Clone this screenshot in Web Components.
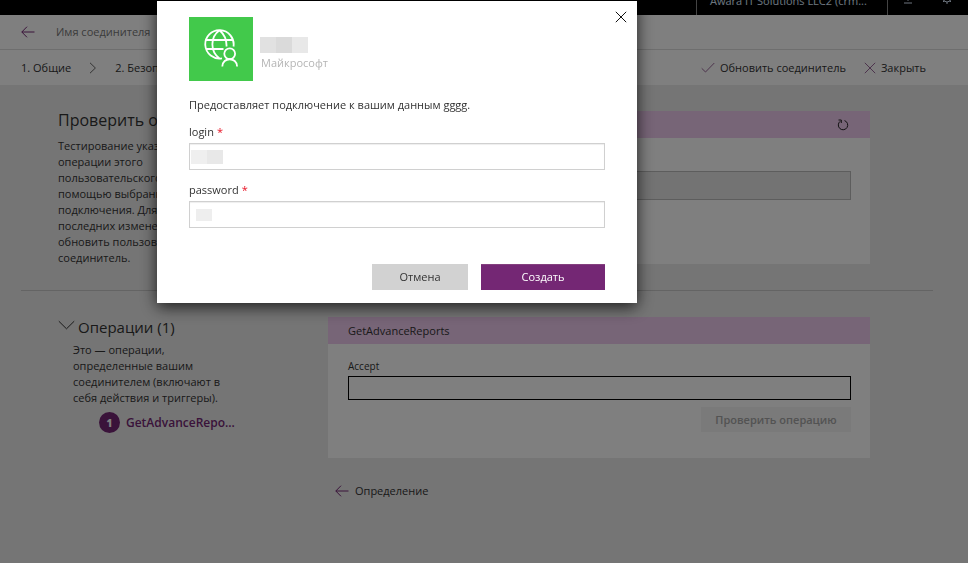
<!DOCTYPE html>
<html lang="ru">
<head>
<meta charset="utf-8">
<title>Проверка соединителя</title>
<style>
html, body { margin: 0; min-height: 100%; background: #ebebeb; }
body { font: 11px/16px "Open Sans", "Noto Sans", sans-serif; color: #333; }
</style>
</head>
<body>
<connector-page></connector-page>
<script>
const define = (name, html, setup) => customElements.define(name, class extends HTMLElement {
  connectedCallback() {
    if (this.shadowRoot) return;
    const t = document.createElement('template');
    t.innerHTML = html;
    this.attachShadow({ mode: 'open' }).append(t.content.cloneNode(true));
    if (setup) setup(this, this.shadowRoot);
  }
});

const icons = {
  back: [14, 12, '<path d="M13.5 6H.8M6 .7.8 6 6 11.3"/>'],
  next: [8, 12, '<path d="M1 .8 6.4 6 1 11.2"/>'],
  down: [17, 10, '<path d="M.8 1.2 8.5 8.8 16.200 1.2"/>'],
  check: [14, 12, '<path d="M.7 6.300 4.500 10 13.300 1"/>'],
  cross: [12, 12, '<path d="M.8.8 11.200 11.200M11.200.8.8 11.200"/>'],
  refresh: [12, 12, '<path d="M7.500 1.600A4.700 4.700 0 1 1 3.200 2.300M1.500 1H4.300V4"/>'],
  download: [10, 10, '<path d="M5 0V6M2.500 4 5 6.500 7.500 4M1 9H9"/>'],
  gear: [12, 12, '<circle cx="6" cy="6" r="4"/><circle cx="6" cy="6" r="1.500"/><path d="M6 0V2M6 10V12M0 6H2M10 6H12M2 2 3.300 3.300M8.700 8.700 10 10M10 2 8.700 3.300M3.300 8.700 2 10"/>'],
  globe: [36, 40, '<g stroke-width="1.800"><path d="M19 29.300A14.200 14.200 0 1 1 30.500 17.500M16.500 1.200C7 8 7 22.500 16.500 29.500M16.500 1.200C21.500 5.500 23.800 11 23.500 17.500M3.300 11H29.700M3.300 20H20.500"/><circle cx="26.700" cy="24.800" r="5.400"/><path d="M19.300 37.500C19.500 27.800 33.900 27.800 34.100 37.500"/></g>']
};
define('ui-icon', '<style>:host{display:inline-flex;flex:none}svg{display:block;fill:none;stroke:currentColor;stroke-width:1}</style>', (el, root) => {
  const [w, h, body] = icons[el.getAttribute('name')];
  root.innerHTML += `<svg width="${w}" height="${h}" viewBox="0 0 ${w} ${h}" aria-hidden="true">${body}</svg>`;
});

define('top-bar', `
<style>
:host{display:flex;justify-content:flex-end;align-items:flex-end;height:15px;overflow:hidden;background:#000;color:#dcebff}
.org{box-sizing:border-box;width:192px;height:32px;padding:10px 12px 0 13px;border:solid #888;border-width:0 1px;white-space:nowrap}
.tools{display:flex;align-items:flex-end;gap:28px;width:80px;height:32px;box-sizing:border-box;padding:0 0 11px 15px}
</style>
<div class="org">Awara IT Solutions LLC2 (crm...</div>
<div class="tools"><ui-icon name="download"></ui-icon><ui-icon name="gear"></ui-icon></div>`);

define('title-bar', `
<style>
:host{display:flex;align-items:center;gap:21px;height:34px;padding:0 21px;background:#fff;border-bottom:1px solid #dcdcdc;color:#777}
button{display:flex;padding:0;border:0;background:none;color:#742774}
</style>
<button aria-label="Назад"><ui-icon name="back"></ui-icon></button><slot></slot>`);

define('step-bar', `
<style>
:host{display:flex;align-items:center;height:35px;padding:0 42px 0 21px;background:#fff}
a{color:inherit;text-decoration:none;white-space:nowrap}
nav{display:flex;align-items:center;gap:18px;flex:1;color:#333}
nav ui-icon{color:#666}
.actions{display:flex;gap:18px}
button{display:flex;align-items:center;gap:5px;padding:0;border:0;background:none;font:inherit;color:#333}
button ui-icon{color:#996699}
</style>
<nav><a href="#general">1. Общие</a><ui-icon name="next"></ui-icon><a href="#security">2. Безопасность</a></nav>
<div class="actions"><button><ui-icon name="check"></ui-icon>Обновить соединитель</button><button><ui-icon name="cross"></ui-icon>Закрыть</button></div>`);

define('page-section', `
<style>
:host{display:flex;align-items:flex-start}
.info{width:307px;flex:none;box-sizing:border-box}
.card{flex:1;min-width:0;margin-right:63px}
</style>
<div class="info"><slot name="info"></slot></div><div class="card"><slot></slot></div>`);

define('test-card', `
<style>
:host{display:block;background:#fff}
header{display:flex;align-items:center;justify-content:space-between;height:27px;padding:0 21px 0 20px;background:#efcaef;font-weight:500}
.body{padding:16px 19px 26px 20px}
</style>
<header><slot name="title"></slot><slot name="tool"></slot></header>
<div class="body"><slot></slot></div>`);

define('test-intro', `
<style>
:host{display:block;padding-left:37px}
h2{margin:0 0 9px;font-size:16px;line-height:18px;font-weight:400}
p{margin:0;white-space:nowrap}
</style>
<h2>Проверить операцию</h2>
<p>Тестирование указанной<br>операции этого<br>пользовательского<br>помощью выбранного<br>подключения. Для<br>последних изменений<br>обновить пользовательский<br>соединитель.</p>`);

define('operations-intro', `
<style>
:host{display:block;padding-left:37px}
h2{display:flex;align-items:flex-start;gap:3px;margin:0 0 5px;font-size:15px;line-height:20px;font-weight:400}
h2 ui-icon{padding-top:3px}
p{margin:0 0 6px 15px;white-space:nowrap}
a{display:flex;align-items:center;gap:6px;margin-left:41px;color:#742774;font-size:12px;font-weight:600;text-decoration:none}
b{display:grid;place-items:center;width:21px;height:21px;border-radius:50%;background:#742774;color:#fff;font-size:10px}
</style>
<h2><ui-icon name="down"></ui-icon>Операции (1)</h2>
<p>Это — операции,<br>определенные вашим<br>соединителем (включают в<br>себя действия и триггеры).</p>
<a href="#operation"><b>1</b>GetAdvanceRepo...</a>`);

define('connection-form', `
<style>
:host{display:block}
label{display:block;margin-bottom:5px;font-size:10px;line-height:12px}
select{display:block;appearance:none;width:100%;height:29px;box-sizing:border-box;border:1px solid #bbb;border-radius:0;background:#e6e6e6;opacity:1}
div{height:38px}
</style>
<label for="c">Подключения</label><select id="c" disabled><option></option></select><div></div>`);

define('operation-form', `
<style>
:host{display:block}
label{display:block;margin-bottom:4px;font-size:10px;line-height:12px}
input{display:block;width:100%;height:24px;box-sizing:border-box;border:1px solid #000;border-radius:0;background:#fff}
button{display:block;margin:7px 0 0 auto;width:150px;height:25px;padding:0;border:0;background:#f4f4f4;color:#a6a6a6;font:inherit;font-weight:600}
</style>
<label for="a">Accept</label><input id="a"><button disabled>Проверить операцию</button>`);

define('form-field', `
<style>
:host{display:block}
label{display:flex;gap:3px;line-height:16px;margin-bottom:3px}
.star{color:#e81123}
input{display:block;width:100%;height:27px;box-sizing:border-box;padding:0 6px;border:1px solid #d0d0d0;border-radius:0;box-shadow:inset 0 1px 1px #eee;font:inherit;background:var(--mask,#fff)}
</style>
<label for="f"><span class="text"></span><span class="star">*</span></label><input id="f">`, (el, root) => {
  root.querySelector('.text').textContent = el.getAttribute('label');
  root.querySelector('input').type = el.getAttribute('type');
});

define('connection-dialog', `
<style>
:host{position:fixed;inset:0;z-index:10;box-sizing:border-box;padding:1px 0 0 157px;background:rgba(0,0,0,.5)}
.box{display:flex;flex-direction:column;width:480px;max-width:100%;box-sizing:border-box;padding:9px 10px 13px 32px;background:#fff;box-shadow:0 4px 15px rgba(0,0,0,.75);color:#333}
.head{display:flex;align-items:flex-start;gap:7px}
.logo{display:grid;place-items:center;width:64px;height:64px;margin-top:7px;background:#42c94b;color:#fff}
.who{flex:1;padding-top:27px}
.name{width:48px;height:16px;background:linear-gradient(90deg,#e1e1e1 16px,#dadada 16px 32px,#e8e8e8 32px)}
small{display:block;padding:2px 0 0 1px;font-size:11px;color:#b5b5b5}
button{padding:0;border:0;font:inherit}
.close{display:flex;padding:1px 0;background:none;color:#111}
form{display:flex;flex-direction:column;padding:16px 22px 0 0}
p{margin:0 0 11px}
form-field+form-field{margin-top:12px}
.login{--mask:linear-gradient(90deg,#efefef 16px,#e8e8e8 16px) 1px 6px/32px 14px no-repeat #fff}
.password{--mask:linear-gradient(#eee,#eee) 6px 7px/16px 12px no-repeat #fff}
.buttons{display:flex;justify-content:flex-end;gap:13px;margin-top:36px}
.buttons button{width:96px;height:26px;background:#d2d2d2;color:#333}
.buttons .create{width:124px;background:#742774;color:#fff;font-weight:500;box-shadow:inset 0 1px #84407f}
</style>
<div class="box" role="dialog" aria-modal="true" aria-label="Подключение">
<div class="head"><div class="logo"><ui-icon name="globe"></ui-icon></div><div class="who"><div class="name"></div><small>Майкрософт</small></div><button class="close" aria-label="Закрыть"><ui-icon name="cross"></ui-icon></button></div>
<form><p>Предоставляет подключение к вашим данным gggg.</p>
<form-field class="login" label="login" type="text"></form-field>
<form-field class="password" label="password" type="password"></form-field>
<div class="buttons"><button type="button">Отмена</button><button type="button" class="create">Создать</button></div></form>
</div>`);

define('connector-page', `
<style>
:host{display:block}
main{padding:26px 35px 0 21px}
hr{margin:24px 0 26px;border:0;border-top:1px solid #c8c8c8}
.tool{display:flex;padding:0;border:0;background:none;color:#222}
.prev{display:inline-flex;align-items:center;gap:6px;margin:25px 0 0 314px;color:#333;text-decoration:none}
.prev ui-icon{color:#742774}
</style>
<top-bar></top-bar>
<title-bar>Имя соединителя</title-bar>
<step-bar></step-bar>
<main>
<page-section><test-intro slot="info"></test-intro>
<test-card><span slot="title">Подключения</span><button slot="tool" class="tool" aria-label="Обновить"><ui-icon name="refresh"></ui-icon></button><connection-form></connection-form></test-card></page-section>
<hr>
<page-section><operations-intro slot="info"></operations-intro>
<test-card><span slot="title">GetAdvanceReports</span><operation-form></operation-form></test-card></page-section>
<a class="prev" href="#definition"><ui-icon name="back"></ui-icon>Определение</a>
</main>
<connection-dialog></connection-dialog>`);
</script>
</body>
</html>
